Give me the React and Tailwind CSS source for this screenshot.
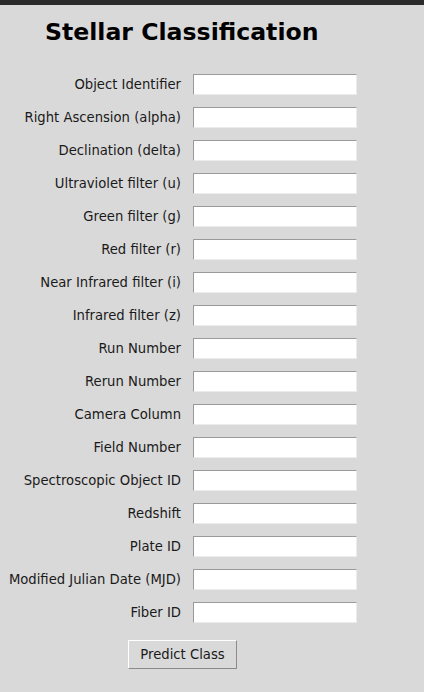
const fields = [
  'Object Identifier',
  'Right Ascension (alpha)',
  'Declination (delta)',
  'Ultraviolet filter (u)',
  'Green filter (g)',
  'Red filter (r)',
  'Near Infrared filter (i)',
  'Infrared filter (z)',
  'Run Number',
  'Rerun Number',
  'Camera Column',
  'Field Number',
  'Spectroscopic Object ID',
  'Redshift',
  'Plate ID',
  'Modified Julian Date (MJD)',
  'Fiber ID',
]

export default function App() {
  return (
    <div className="h-screen bg-[#d9d9d9] text-black" style={{ fontFamily: '"DejaVu Sans", sans-serif' }}>
      <div className="h-[5px] bg-[#2b2b2b]" />
      <h1 className="pl-[45px] pt-[12px] text-[23.6px] font-bold leading-[30px]">Stellar Classification</h1>

      {/* form grid */}
      <div className="mt-[27px] grid grid-cols-[181px_164px] gap-x-[12px] gap-y-[12px]">
        {fields.map((f) => (
          <div key={f} className="contents">
            <label className="flex h-[21px] items-center justify-end text-[13.2px] text-[#1a1a1a] whitespace-nowrap">{f}</label>
            <input
              type="text"
              className="h-[21px] w-[164px] border border-t-[#9a9a9a] border-l-[#9a9a9a] border-b-[#ececec] border-r-[#ececec] bg-white px-1 text-[13px] outline-none"
            />
          </div>
        ))}
      </div>

      <div className="mt-[17px] pl-[128px]">
        <button className="h-[29px] w-[109px] border border-t-white border-l-white border-b-[#8a8a8a] border-r-[#8a8a8a] bg-[#d9d9d9] text-[13.2px] text-[#1a1a1a]">
          Predict Class
        </button>
      </div>
    </div>
  )
}
